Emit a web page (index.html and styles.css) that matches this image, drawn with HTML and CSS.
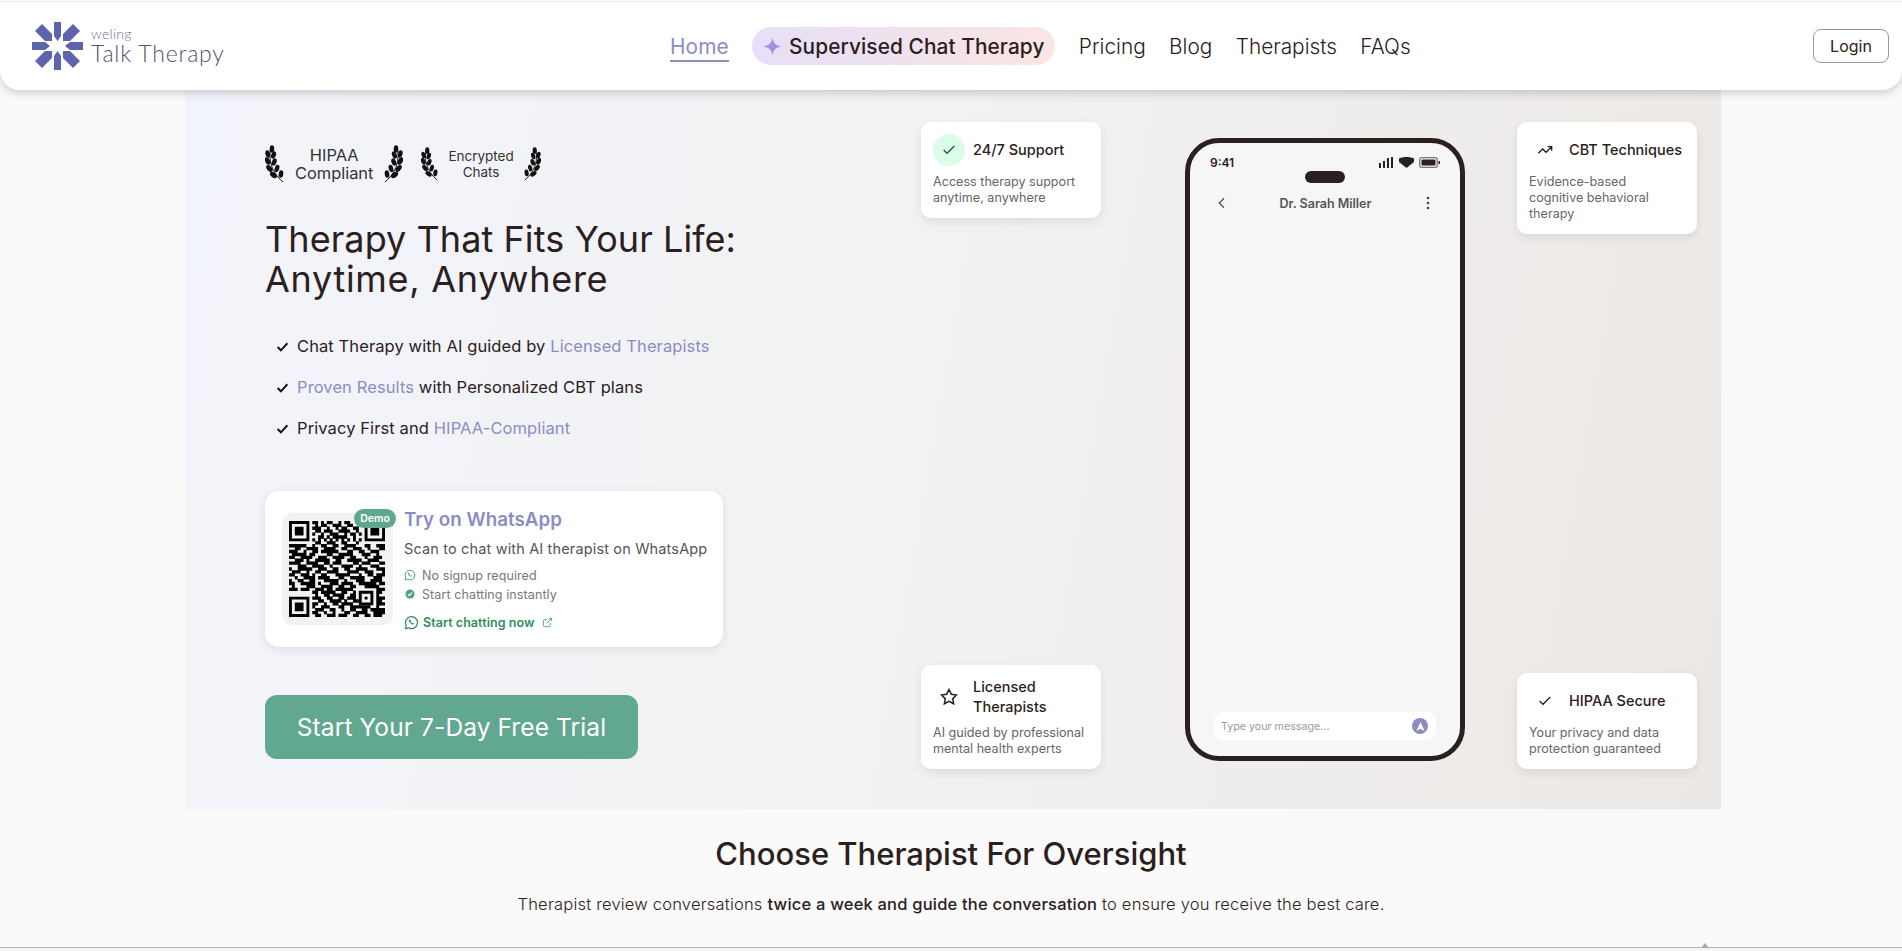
FILE: index.html
```html
<!DOCTYPE html>
<html lang="en">
<head>
<meta charset="utf-8">
<title>Weling Talk Therapy</title>
<link rel="stylesheet" href="styles.css">
</head>
<body>
<svg class="defs" width="0" height="0" aria-hidden="true">
  <symbol id="laurel" viewBox="0 0 20 38">
    <path d="M6 1C3 14 6 27 18 37" fill="none" stroke="#111" stroke-width="1"/>
    <g fill="#111">
      <ellipse cx="7" cy="4" rx="2.300" ry="3.800"/>
      <ellipse cx="2.800" cy="9" rx="2.300" ry="3.800" transform="rotate(-15 2.800 9)"/>
      <ellipse cx="8.600" cy="10" rx="2.300" ry="3.800" transform="rotate(20 8.600 10)"/>
      <ellipse cx="2.600" cy="16" rx="2.400" ry="4" transform="rotate(-25 2.600 16)"/>
      <ellipse cx="9.200" cy="17" rx="2.300" ry="3.800" transform="rotate(20 9.200 17)"/>
      <ellipse cx="4.400" cy="23.500" rx="2.400" ry="4" transform="rotate(-38 4.400 23.500)"/>
      <ellipse cx="12" cy="23.500" rx="2.300" ry="3.800" transform="rotate(15 12 23.500)"/>
      <ellipse cx="8.400" cy="30" rx="2.400" ry="4" transform="rotate(-52 8.400 30)"/>
      <ellipse cx="16" cy="29" rx="2.300" ry="3.800" transform="rotate(8 16 29)"/>
    </g>
  </symbol>
  <symbol id="whatsapp" viewBox="0 0 24 24">
    <path d="M7.200 20.500A9.600 9.600 0 1 0 3.600 16.800L2.200 21.800Z" fill="none" stroke="currentColor" stroke-width="2" stroke-linejoin="round"/>
    <path d="M8.600 7.400c-.9.8-1 2 .1 3.900 1.200 2.100 3 3.500 4.900 3.900 1.300.2 2.300-.5 2.600-1.500l-2.200-1.300-1 .9c-1-.4-2.100-1.500-2.600-2.700l.8-1-1.100-2.300z" fill="currentColor"/>
  </symbol>
</svg>

<div class="topline"></div>
<header class="header">
  <a class="logo">
    <svg class="logo-mark" viewBox="0 0 51 48" aria-hidden="true">
      <g fill="#5d63ad">
        <path d="M22 0h7v14l-3.500 5-3.500-5z"/>
        <path d="M22 48h7V34l-3.500-5-3.500 5z"/>
        <path d="M0 20h13l5 4-5 4H0z"/>
        <path d="M51 20H38l-5 4 5 4h13z"/>
        <path d="M10 2L3 9l10 10h7v-7z"/>
        <path d="M41 2l7 7-10 10h-7v-7z"/>
        <path d="M10 46l-7-7 10-10h7v7z"/>
        <path d="M41 46l7-7-10-10h-7v7z"/>
      </g>
    </svg>
    <span class="logo-text">
      <span class="logo-small">weling</span>
      <span class="logo-big">Talk Therapy</span>
    </span>
  </a>
  <nav class="nav">
    <a class="nav-link nav-active">Home</a>
    <a class="nav-pill">
      <svg class="sparkle" viewBox="0 0 24 24" aria-hidden="true"><path d="M12 0C13 8 16 11 24 12 16 13 13 16 12 24 11 16 8 13 0 12 8 11 11 8 12 0Z"/></svg>
      Supervised Chat Therapy
    </a>
    <a class="nav-link">Pricing</a>
    <a class="nav-link">Blog</a>
    <a class="nav-link">Therapists</a>
    <a class="nav-link">FAQs</a>
  </nav>
  <button class="login">Login</button>
</header>

<main>
  <section class="hero">
    <div class="hero-left">
      <div class="badges">
        <div class="badge">
          <svg class="laurel"><use href="#laurel"/></svg>
          <span class="badge-text">HIPAA<br>Compliant</span>
          <svg class="laurel flip"><use href="#laurel"/></svg>
        </div>
        <div class="badge badge-small">
          <svg class="laurel"><use href="#laurel"/></svg>
          <span class="badge-text">Encrypted<br>Chats</span>
          <svg class="laurel flip"><use href="#laurel"/></svg>
        </div>
      </div>
      <h1 class="title">Therapy That Fits Your Life:<br><span class="title-second">Anytime, Anywhere</span></h1>
      <ul class="points">
        <li class="point"><svg class="tick" viewBox="0 0 24 24"><path d="M3 13l6 6L21 6"/></svg><span>Chat Therapy with AI guided by <em class="hl">Licensed Therapists</em></span></li>
        <li class="point"><svg class="tick" viewBox="0 0 24 24"><path d="M3 13l6 6L21 6"/></svg><span><em class="hl">Proven Results</em> with Personalized CBT plans</span></li>
        <li class="point"><svg class="tick" viewBox="0 0 24 24"><path d="M3 13l6 6L21 6"/></svg><span>Privacy First and <em class="hl">HIPAA-Compliant</em></span></li>
      </ul>
      <div class="qr-card">
        <div class="qr-box">
          <svg class="qr" viewBox="0 0 33 33" aria-label="QR code">
            <path fill-rule="evenodd" d="M0 0h7v7H0zM1 1v5h5V1zM2 2h3v3H2zM26 0h7v7h-7zM27 1v5h5V1zM28 2h3v3h-3zM0 26h7v7H0zM1 27v5h5v-5zM2 28h3v3H2zM24 24h5v5h-5zM25 25v3h3v-3zM26 26h1v1h-1z"/>
            <path class="qr-run" d="M8 .5h2M11 .5h1M13 .5h2M17 .5h1M19 .5h2M23 .5h1M9 1.500h1M11 1.500h2M15 1.500h3M20 1.500h2M24 1.500h1M8 2.500h3M13 2.500h1M16 2.500h1M18 2.500h2M22 2.500h2M9 3.500h2M12 3.500h3M17 3.500h4M23 3.500h1M8 4.500h1M11 4.500h1M14 4.500h3M19 4.500h1M21 4.500h2M24 4.500h1M10 5.500h2M13 5.500h1M15 5.500h5M22 5.500h1M8 6.500h1M10 6.500h1M12 6.500h1M14 6.500h1M16 6.500h1M18 6.500h1M20 6.500h1M22 6.500h1M24 6.500h1M9 7.500h2M13 7.500h3M18 7.500h2M23 7.500h1M0 8.500h6M8 8.500h1M11 8.500h2M15 8.500h2M19 8.500h4M26 8.500h2M30 8.500h3M2 9.500h2M6 9.500h4M12 9.500h4M18 9.500h2M22 9.500h3M27 9.500h1M31 9.500h2M0 10.500h3M5 10.500h1M8 10.500h2M11 10.500h6M20 10.500h2M24 10.500h2M28 10.500h3M1 11.500h5M7 11.500h2M13 11.500h2M17 11.500h5M25 11.500h3M30 11.500h1M0 12.500h2M4 12.500h4M10 12.500h3M15 12.500h4M21 12.500h2M26 12.500h1M29 12.500h3M2 13.500h3M6 13.500h1M9 13.500h5M16 13.500h2M20 13.500h5M27 13.500h4M0 14.500h4M6 14.500h4M12 14.500h2M15 14.500h3M22 14.500h2M25 14.500h3M31 14.500h2M3 15.500h3M8 15.500h4M14 15.500h1M18 15.500h4M24 15.500h1M28 15.500h3M0 16.500h1M3 16.500h5M10 16.500h3M15 16.500h2M19 16.500h2M23 16.500h4M30 16.500h3M1 17.500h3M6 17.500h1M9 17.500h2M13 17.500h4M20 17.500h4M26 17.500h3M32 17.500h1M0 18.500h2M4 18.500h3M8 18.500h1M11 18.500h2M16 18.500h5M24 18.500h1M27 18.500h2M30 18.500h3M2 19.500h1M5 19.500h4M10 19.500h4M17 19.500h2M21 19.500h5M29 19.500h3M0 20.500h1M3 20.500h2M7 20.500h2M12 20.500h5M19 20.500h1M23 20.500h3M28 20.500h4M0 21.500h2M4 21.500h5M10 21.500h1M14 21.500h3M18 21.500h4M24 21.500h6M31 21.500h2M1 22.500h1M6 22.500h3M11 22.500h4M17 22.500h2M21 22.500h2M26 22.500h5M0 23.500h3M4 23.500h3M9 23.500h3M13 23.500h2M16 23.500h6M30 23.500h3M8 24.500h2M11 24.500h5M18 24.500h2M22 24.500h1M30 24.500h2M9 25.500h1M12 25.500h2M15 25.500h4M21 25.500h2M30 25.500h1M8 26.500h3M13 26.500h2M17 26.500h2M20 26.500h3M30 26.500h3M10 27.500h2M14 27.500h4M19 27.500h1M22 27.500h2M30 27.500h2M8 28.500h2M12 28.500h1M15 28.500h2M18 28.500h4M30 28.500h3M8 29.500h1M11 29.500h3M17 29.500h2M21 29.500h7M30 29.500h1M9 30.500h3M14 30.500h2M18 30.500h1M21 30.500h2M25 30.500h2M28 30.500h5M8 31.500h2M12 31.500h1M15 31.500h1M19 31.500h2M23 31.500h4M29 31.500h4M9 32.500h2M13 32.500h3M17 32.500h3M22 32.500h2M26 32.500h2M29 32.500h3"/>
          </svg>
          <span class="demo">Demo</span>
        </div>
        <div class="qr-info">
          <div class="qr-title">Try on WhatsApp</div>
          <div class="qr-sub">Scan to chat with AI therapist on WhatsApp</div>
          <div class="qr-item"><svg class="qr-ic"><use href="#whatsapp"/></svg>No signup required</div>
          <div class="qr-item"><svg class="qr-ic" viewBox="0 0 24 24"><circle cx="12" cy="12" r="9" fill="currentColor"/><path d="M8 12.200l3 3 5-6" fill="none" stroke="#fff" stroke-width="2.500"/></svg>Start chatting instantly</div>
          <a class="qr-link"><svg class="qr-ic-big"><use href="#whatsapp"/></svg>Start chatting now<svg class="ext" viewBox="0 0 24 24"><path d="M18 13v6a2 2 0 0 1-2 2H5a2 2 0 0 1-2-2V8a2 2 0 0 1 2-2h6M15 3h6v6M10 14L21 3"/></svg></a>
        </div>
      </div>
      <a class="cta">Start Your 7-Day Free Trial</a>
    </div>

    <div class="hero-right">
      <div class="feature-col">
        <article class="feature">
          <div class="feature-head">
            <span class="f-icon f-icon-mint"><svg class="f-svg f-svg-green" viewBox="0 0 24 24"><path d="M20 6L9 17l-5-5"/></svg></span>
            <h3 class="f-title">24/7 Support</h3>
          </div>
          <p class="f-desc">Access therapy support anytime, anywhere</p>
        </article>
        <article class="feature">
          <div class="feature-head">
            <span class="f-icon"><svg class="f-svg f-svg-lg" viewBox="0 0 24 24"><polygon points="12 2 15.09 8.26 22 9.27 17 14.14 18.18 21.02 12 17.77 5.82 21.02 7 14.14 2 9.27 8.91 8.26"/></svg></span>
            <h3 class="f-title">Licensed Therapists</h3>
          </div>
          <p class="f-desc">AI guided by professional mental health experts</p>
        </article>
      </div>

      <div class="phone">
        <div class="status">
          <span class="time">9:41</span>
          <span class="status-icons">
            <svg class="st-signal" viewBox="0 0 15 11"><path d="M0 6h2v5H0zM4 4h2v7H4zM8 1h2v10H8zM12 0h2v11h-2z"/></svg>
            <svg class="st-wifi" viewBox="0 0 15 11"><path d="M0 1.500C4-.5 11-.5 15 1.500V5l-7.500 6L0 5z"/></svg>
            <svg class="st-batt" viewBox="0 0 21 11"><rect x=".7" y=".7" width="17.600" height="9.600" rx="2" fill="none" stroke="#777" stroke-width="1.300"/><rect x="2.500" y="2.500" width="14" height="6" rx="1"/><rect x="19.500" y="4" width="1.500" height="3"/></svg>
          </span>
        </div>
        <div class="island"></div>
        <div class="chat-head">
          <svg class="chat-ic" viewBox="0 0 24 24"><path d="M15 5l-7 7 7 7"/></svg>
          <span class="chat-name">Dr. Sarah Miller</span>
          <svg class="chat-more" viewBox="0 0 4 14"><circle cx="2" cy="2" r="1.300"/><circle cx="2" cy="7" r="1.300"/><circle cx="2" cy="12" r="1.300"/></svg>
        </div>
        <div class="chat-input">
          <span class="placeholder">Type your message...</span>
          <span class="send"><svg class="send-ic" viewBox="0 0 10 10"><path d="M5 0l4.500 10L5 7.500.5 10z"/></svg></span>
        </div>
      </div>

      <div class="feature-col">
        <article class="feature">
          <div class="feature-head">
            <span class="f-icon"><svg class="f-svg" viewBox="0 0 24 24"><path d="M22 7l-8.500 8.500-5-5L2 17M16 7h6v6"/></svg></span>
            <h3 class="f-title">CBT Techniques</h3>
          </div>
          <p class="f-desc">Evidence-based<br>cognitive behavioral therapy</p>
        </article>
        <article class="feature">
          <div class="feature-head">
            <span class="f-icon"><svg class="f-svg" viewBox="0 0 24 24"><path d="M20 6L9 17l-5-5"/></svg></span>
            <h3 class="f-title">HIPAA Secure</h3>
          </div>
          <p class="f-desc">Your privacy and data protection guaranteed</p>
        </article>
      </div>
    </div>
  </section>

  <section class="oversight">
    <h2 class="o-title">Choose Therapist For Oversight</h2>
    <p class="o-text">Therapist review conversations <strong class="o-strong">twice a week and guide the conversation</strong> to ensure you receive the best care.</p>
  </section>
</main>
<div class="scrollbar"><span class="scroll-arrow"></span></div>
</body>
</html>
```
FILE: styles.css
```css
* { box-sizing: border-box; }
html, body { margin: 0; height: 951px; overflow: hidden; }
body {
  position: relative;
  background: #fafafa;
  color: #2b2020;
  font-family: Inter, "Open Sans", sans-serif;
}
.defs { position: absolute; }
h1, h2, h3, p, ul { margin: 0; padding: 0; }
em { font-style: normal; }

.topline { position: relative; z-index: 3; height: 2px; background: #fbdfe3; border-top: 1px solid #fff; }
.header {
  position: relative;
  z-index: 2;
  height: 88px;
  display: flex;
  align-items: center;
  padding: 0 13px 0 32px;
  background: #fff;
  border-radius: 0 0 20px 20px;
  box-shadow: 0 3px 10px rgba(0, 0, 0, .18);
}
.logo { display: flex; align-items: center; gap: 8px; width: 190px; flex: none; }
.logo-mark { width: 51px; height: 48px; flex: none; }
.logo-text { display: flex; flex-direction: column; font-family: Lato, sans-serif; font-weight: 300; color: #4f5472; }
.logo-small { font-size: 14px; line-height: 15px; color: #70738c; letter-spacing: .3px; }
.logo-big { font-size: 23px; line-height: 25px; letter-spacing: .8px; white-space: nowrap; }

.nav { display: flex; align-items: center; gap: 23.4px; margin-left: 448px; }
.nav-link { font-size: 20.8px; font-weight: 300; color: #2b2020; line-height: 30px; margin-top: 2px; white-space: nowrap; }
.nav-active { color: #8c8cc4; font-weight: 400; border-bottom: 2px solid #8c8cc4; line-height: 27px; margin-top: 3px; letter-spacing: .1px; }
.nav-pill {
  display: flex; align-items: center; gap: 7px;
  height: 38px; padding: 0 11px;
  border-radius: 19px;
  background: linear-gradient(90deg, #e6dff8, #fae6e3);
  font-size: 20.8px; font-weight: 500; white-space: nowrap; letter-spacing: .1px;
}
.sparkle { width: 19px; height: 19px; fill: #a78fe0; flex: none; }
.login {
  margin-left: auto; width: 76px; height: 34px;
  background: #fff; border: 1px solid #999; border-radius: 8px;
  font: 400 16px Inter, sans-serif; color: #2b2020;
}

.hero {
  width: 1536px; height: 719px;
  margin-left: 185px;
  display: flex;
  background: linear-gradient(100deg, #f2f4fb 0%, #f2f2f3 45%, #ece8e5 100%);
}
.hero-left { width: 736px; flex: none; padding: 55px 0 0 80px; }
.badges { display: flex; align-items: center; gap: 18px; height: 38px; }
.badge { display: flex; align-items: center; gap: 10px; }
.laurel { width: 20px; height: 38px; flex: none; }
.flip { transform: scaleX(-1); }
.badge-text { font-size: 16.4px; line-height: 18px; text-align: center; color: #333; white-space: nowrap; }
.badge-small { gap: 9px; }
.badge-small .badge-text { font-size: 13.5px; line-height: 16px; }
.badge-small .laurel { width: 18px; height: 34px; }

.title { margin-top: 36px; font-size: 36px; line-height: 40px; font-weight: 400; letter-spacing: .07px; color: #2b2020; white-space: nowrap; }
.title-second { letter-spacing: .7px; }
.points { list-style: none; margin-top: 35px; display: flex; flex-direction: column; gap: 17px; }
.point { display: flex; align-items: center; gap: 8px; padding-left: 11px; height: 24px; font-size: 16.5px; color: #2b2020; letter-spacing: .1px; }
.tick { width: 13px; height: 13px; fill: none; stroke: #111; stroke-width: 3.5; flex: none; }
.hl { color: #8c8cc4; }

.qr-card {
  width: 458px; height: 156px; margin-top: 51px;
  display: flex; gap: 11px; padding: 22px 0 0 17px;
  background: #fff; border-radius: 14px;
  box-shadow: 0 2px 8px rgba(0, 0, 0, .09);
}
.qr-box { position: relative; width: 111px; height: 112px; flex: none; background: #f0f2f3; border-radius: 10px; padding: 8px 7px; }
.qr { display: block; width: 96px; height: 96px; }
.qr-run { fill: none; stroke: #000; stroke-width: 1.15; }
.demo {
  position: absolute; top: -4px; right: -3px;
  width: 42px; height: 19px;
  background: #5fa88f; color: #fff; border-radius: 10px;
  font-size: 10.5px; font-weight: 600; line-height: 19px; text-align: center;
}
.qr-info { margin-top: -7px; }
.qr-title { font-size: 18.8px; line-height: 28px; font-weight: 600; color: #8c8cc4; white-space: nowrap; }
.qr-sub { font-size: 14.5px; line-height: 20px; margin-top: 5px; color: #555; white-space: nowrap; letter-spacing: .15px; }
.qr-item { display: flex; align-items: center; gap: 6px; height: 20px; font-size: 12.5px; color: #777; letter-spacing: .1px; }
.qr-item:nth-of-type(3) { margin-top: 6px; }
.qr-item:nth-of-type(4) { margin-top: -1px; }
.qr-ic { width: 12px; height: 12px; color: #4aa580; flex: none; }
.qr-link { display: flex; align-items: center; gap: 4px; height: 20px; margin-top: 8px; font-size: 12.5px; font-weight: 600; color: #2f8f5b; letter-spacing: .05px; }
.qr-ic-big { width: 15px; height: 15px; color: #2f8f5b; flex: none; }
.ext { width: 11px; height: 11px; fill: none; stroke: #4aa580; stroke-width: 2; margin-left: 4px; }

.cta {
  display: flex; align-items: center; justify-content: center;
  width: 373px; height: 64px; margin-top: 48px;
  background: #62a78f; color: #fff; border-radius: 12px;
  font-size: 24.5px; letter-spacing: .1px;
}

.hero-right { display: flex; padding-top: 32px; }
.feature-col { width: 180px; height: 647px; flex: none; display: flex; flex-direction: column; justify-content: space-between; }
.feature {
  background: #fff; border-radius: 10px; padding: 12px;
  box-shadow: 0 4px 10px rgba(0, 0, 0, .08);
}
.feature-head { display: flex; align-items: center; gap: 8px; min-height: 32px; margin-bottom: 8px; }
.f-icon { width: 32px; height: 32px; flex: none; display: flex; align-items: center; justify-content: center; border-radius: 50%; }
.f-icon-mint { background: #dcfce7; }
.f-svg { width: 16px; height: 16px; fill: none; stroke: #222; stroke-width: 2; }
.f-svg-green { stroke: #166534; }
.f-svg-lg { width: 18px; height: 18px; }
.f-title { font-size: 14.5px; line-height: 20px; font-weight: 500; color: #2b2020; }
.f-desc { font-size: 12.6px; line-height: 16px; color: #666; }

.phone {
  width: 280px; height: 623px; flex: none;
  margin: 16px 52px 0 84px;
  display: flex; flex-direction: column;
  background: #f6f6f6; border: 5px solid #2b2020; border-radius: 34px;
  padding: 11px 20px 16px;
}
.status { display: flex; justify-content: space-between; align-items: center; height: 17px; }
.time { font-size: 12px; font-weight: 600; color: #2b2020; }
.status-icons { display: flex; align-items: center; gap: 5px; }
.st-signal, .st-wifi { width: 15px; height: 11px; fill: #2b2020; }
.st-batt { width: 21px; height: 11px; fill: #2b2020; }
.island { width: 40px; height: 12px; margin: 0 auto; border-radius: 6px; background: #2b2020; }
.chat-head { display: grid; grid-template-columns: 1fr auto 1fr; align-items: center; height: 40px; padding: 0 3px 0 4px; }
.chat-ic { width: 16px; height: 16px; fill: none; stroke: #555; stroke-width: 2; }
.chat-more { width: 4px; height: 14px; fill: #444; justify-self: end; margin-right: 7px; }
.chat-name { font-size: 12.5px; font-weight: 600; color: #555; }
.chat-input {
  margin: auto 4px 0;
  height: 28px; display: flex; align-items: center; justify-content: space-between;
  padding: 0 8px 0 7px;
  background: #fff; border-radius: 9px;
}
.placeholder { font-size: 10.7px; color: #999; }
.send { width: 16px; height: 16px; border-radius: 50%; background: #8c8cc4; display: flex; align-items: center; justify-content: center; }
.send-ic { width: 9px; height: 9px; fill: #fff; }

.oversight { text-align: center; padding-top: 25px; }
.o-title { font-size: 31px; line-height: 40px; font-weight: 500; color: #2b2020; }
.o-text { margin-top: 18px; font-size: 16.5px; line-height: 24px; font-weight: 300; color: #2b2020; letter-spacing: .2px; }
.o-strong { font-weight: 500; }

.scrollbar { position: absolute; left: 0; right: 0; bottom: 0; height: 4px; background: #f3f3f3; border-top: 1px solid #b5b5b5; }
.scroll-arrow { position: absolute; left: 1701px; top: -5px; border: 4px solid transparent; border-top: 0; border-bottom: 5px solid #aaa; }
```
